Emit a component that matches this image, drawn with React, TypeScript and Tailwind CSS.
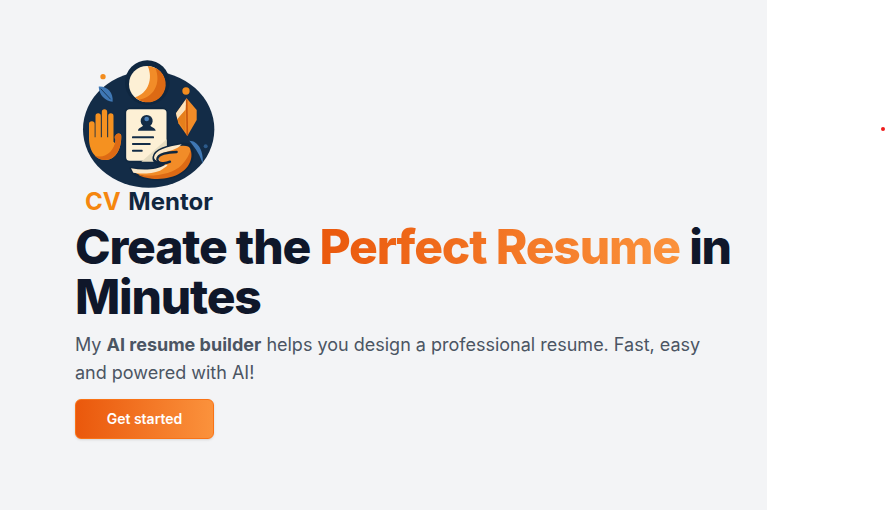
export default function App() {
  return (
    <div className="relative flex h-[510px] w-[886px] overflow-hidden bg-white font-['Inter',sans-serif]">
      <div className="flex w-[767px] flex-col items-start bg-[#f3f4f6] pl-[75px] pt-[60px]">
        <div className="flex w-[150px] flex-col items-start">
          <svg width="150" height="128" viewBox="15 30 450 384" aria-label="CV Mentor logo">
            <ellipse cx="236" cy="238" rx="197" ry="175" fill="#132c47" />
            {/* head */}
            <circle cx="232" cy="98" r="67" fill="#0f2740" />
            <circle cx="231" cy="102" r="54" fill="#fdf0d5" />
            <path d="M233 48A54 54 0 1 1 195 142C235 130 250 85 233 48Z" fill="#f28c28" />
            <path d="M256 54A54 54 0 1 1 205 149C250 145 275 100 256 54Z" fill="#dd6a14" />
            {/* dot + leaf left */}
            <circle cx="99" cy="80" r="8" fill="#f28c1e" />
            <path d="M86 110C112 108 130 128 128 155C104 152 88 135 86 110Z" fill="#3f78b5" />
            <path d="M92 116L122 148" stroke="#132c47" strokeWidth="2.5" />
            {/* hand */}
            <path d="M57 222a8.5 8.5 0 0 1 17 0V262H76.500V198a8 8 0 0 1 16 0V262H95.500V186a8 8 0 0 1 16 0V262H114.500V198a8 8 0 0 1 16 0V275l5 5L137 258a8.500 8.500 0 0 1 17 2C154 292 140 330 105 330C75 330 57 300 57 265Z" fill="#f59120" />
            <path d="M153 255C156 290 140 330 105 330C92 330 82 324 75 317C105 327 132 305 137 270a8.500 8.500 0 0 1 16-15Z" fill="#dd6a14" />
            {/* card */}
            <rect x="166" y="175" width="126" height="160" rx="13" fill="#fdf0d5" stroke="#0f2740" strokeWidth="5" />
            <path d="M214 335L290 268V322a13 13 0 0 1-13 13Z" fill="#e6dcc0" />
            <path d="M204 242c0-9 12-10 15-15a18 18 0 1 1 22 0c3 5 15 6 16 15Z" fill="#132c47" />
            <circle cx="230" cy="207" r="7" fill="#4a7fb8" />
            <rect x="186" y="259" width="66" height="6" rx="2" fill="#132c47" />
            <rect x="186" y="279" width="56" height="6" rx="2" fill="#132c47" />
            <rect x="186" y="299" width="32" height="6" rx="2" fill="#132c47" />
            {/* lower hand */}
            <path d="M183 355C220 362 262 360 280 345C265 345 250 335 252 322C255 300 290 290 335 283C350 282 362 285 365 295C375 330 350 370 300 382C265 392 205 385 190 368Z" fill="#f28c28" stroke="#0f2740" strokeWidth="9" strokeLinejoin="round" />
            <path d="M183 355C220 362 262 360 285 345C300 342 290 350 270 362C245 372 205 372 190 368Z" fill="#fbe8c8" />
            <path d="M252 322C255 300 290 290 335 283C320 300 300 302 282 308C268 312 262 322 270 332C258 334 252 328 252 322Z" fill="#fbe8c8" />
            <path d="M320 306C295 306 262 312 262 328C264 342 285 342 300 335" fill="none" stroke="#0f2740" strokeWidth="7" strokeLinecap="round" />
            <path d="M205 374C250 382 310 372 335 345C350 330 358 312 362 300C372 332 350 370 300 382C265 392 222 385 205 374Z" fill="#dd6a14" />
            {/* right dot + leaf */}
            <circle cx="348" cy="123" r="11" fill="#f28c1e" />
            <path d="M350 145L318 190L325 220L352 258L380 210V180Z" fill="#f28c28" />
            <path d="M350 145L318 190L322 208L346 180Z" fill="#fbe3bd" />
            <path d="M350 148L352 256" stroke="#c9580f" strokeWidth="5" />
            <path d="M322 208L346 180V245Z" fill="#e57f1c" />
            {/* blue swoosh */}
            <path d="M358 272C385 272 402 305 398 342C392 318 378 296 358 272Z" fill="#3f78b5" />
            <circle cx="407" cy="289" r="6" fill="#2c5a8a" />
          </svg>
          <div className="ml-[10px] mt-px flex w-[128px] justify-between text-[24px] font-bold leading-[26px]">
            <span className="text-[#f5860f]">CV</span>
            <span className="text-[#10263f]">Mentor</span>
          </div>
        </div>
        <h1 className="mt-[7px] w-[670px] text-[48px] font-extrabold leading-[50px] tracking-[-1.2px] text-[#0f172a]">
          Create the{" "}
          <span className="bg-linear-to-r/srgb from-[#ea580c] to-[#fb923c] bg-clip-text text-transparent">
            Perfect Resume
          </span>{" "}
          in Minutes
        </h1>
        <p className="mt-[9px] w-[640px] text-[18px] leading-[28px] text-[#4b5563]">
          My <strong className="font-bold">AI resume builder</strong> helps you design a professional resume. Fast, easy and powered with AI!
        </p>
        <button className="mt-[12px] h-[40px] w-[139px] rounded-md border border-[#f97316] bg-linear-to-r/srgb from-[#ea580c] to-[#fb923c] text-sm font-semibold text-white shadow-sm">
          Get started
        </button>
      </div>
      <div className="flex-1 bg-white" />
      <div className="absolute left-[881px] top-[127px] h-1 w-1 rounded-full bg-[#ef1c1c]" />
    </div>
  );
}
